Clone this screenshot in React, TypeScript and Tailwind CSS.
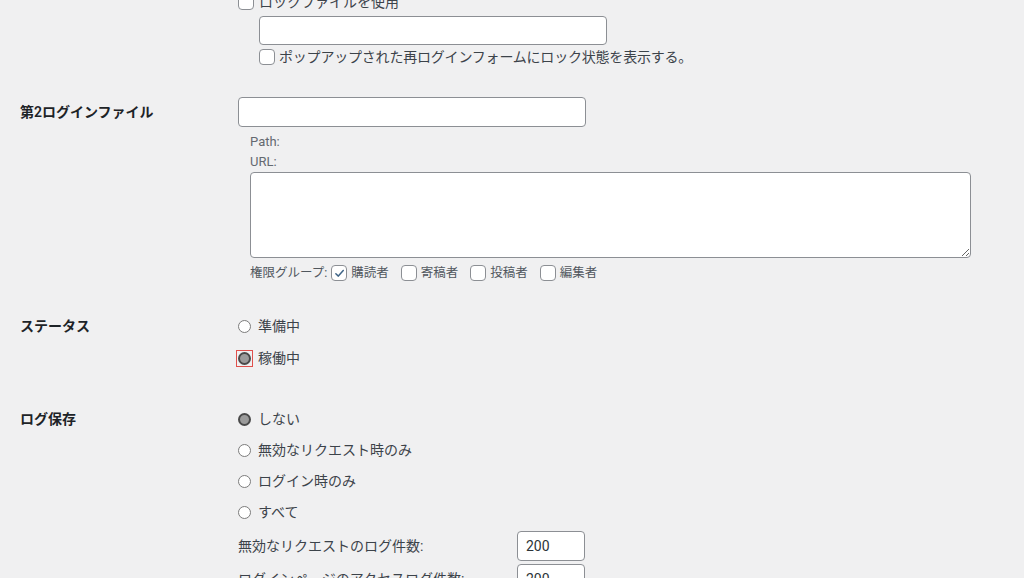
import React from "react";

function Checkbox({ checked = false }: { checked?: boolean }) {
  return (
    <span className="flex h-4 w-4 shrink-0 items-center justify-center rounded-[4px] border border-[#8c8f94] bg-white">
      {checked && (
        <svg viewBox="0 0 16 16" className="h-[13px] w-[13px]">
          <path
            d="M3.5 8.2 L6.6 11.2 L12.6 4.2"
            fill="none"
            stroke="#3f6486"
            strokeWidth="1.8"
            strokeLinecap="round"
            strokeLinejoin="round"
          />
        </svg>
      )}
    </span>
  );
}

function Radio({ checked = false, focused = false }: { checked?: boolean; focused?: boolean }) {
  const dot = checked ? (
    <span className="block h-[13px] w-[13px] shrink-0 rounded-full border-2 border-[#4a4a4a] bg-[#9b9b9b]" />
  ) : (
    <span className="block h-[13px] w-[13px] shrink-0 rounded-full border border-[#7c7c7c] bg-white" />
  );

  if (focused) {
    return (
      <span className="-m-[2px] flex h-[17px] w-[17px] shrink-0 items-center justify-center border border-[#e0504c]">
        {dot}
      </span>
    );
  }

  return dot;
}

function RadioLine({
  label,
  checked,
  focused,
}: {
  label: string;
  checked?: boolean;
  focused?: boolean;
}) {
  return (
    <div className="flex h-6 items-center gap-[7px]">
      <Radio checked={checked} focused={focused} />
      <span>{label}</span>
    </div>
  );
}

function CountRow({ label, value, className }: { label: string; value: string; className?: string }) {
  return (
    <div className={"flex h-[30px] items-center " + (className ?? "")}>
      <span className="w-[279px]">{label}</span>
      <div className="flex h-[30px] w-[68px] items-center rounded-[4px] border border-[#8c8f94] bg-white px-2 text-[#2c3338]">
        {value}
      </div>
    </div>
  );
}

export default function App() {
  const groups = [
    { name: "購読者", checked: true },
    { name: "寄稿者", checked: false },
    { name: "投稿者", checked: false },
    { name: "編集者", checked: false },
  ];

  return (
    <main
      className="h-[578px] overflow-hidden bg-[#f0f0f1] text-[14px] text-[#3c434a]"
      style={{ fontFamily: 'Roboto, "Noto Sans CJK JP", sans-serif' }}
    >
      <section className="-mt-[13px] pl-5">
        {/* lock file */}
        <div className="flex">
          <div className="w-[218px]" />
          <div>
            <div className="mt-[3px] flex h-6 items-center gap-[5px]">
              <Checkbox />
              <span>ロックファイルを使用</span>
            </div>
            <div className="pl-[21px] pt-[2px]">
              <div className="h-[29px] w-[348px] rounded-[4px] border border-[#8c8f94] bg-white" />
              <div className="mt-[4px] flex h-4 items-center gap-[4px]">
                <Checkbox />
                <span className="tracking-[-0.2px]">
                  ポップアップされた再ログインフォームにロック状態を表示する。
                </span>
              </div>
            </div>
          </div>
        </div>

        {/* second login file */}
        <div className="mt-[32px] flex">
          <div className="flex h-[30px] w-[218px] items-center font-semibold text-[#1d2327]">
            第2ログインファイル
          </div>
          <div>
            <div className="h-[30px] w-[348px] rounded-[4px] border border-[#8c8f94] bg-white" />
            <div className="pl-3">
              <p className="mt-[5px] flex h-5 items-center text-[13px] text-[#646970]">Path:</p>
              <p className="flex h-5 items-center text-[13px] text-[#646970]">URL:</p>
              <textarea
                readOnly
                className="block h-[86px] w-[721px] rounded-[4px] border border-[#8c8f94] bg-white"
              />
              <div className="mt-[5px] flex h-5 items-center text-[12.5px] text-[#50575e]">
                <span className="mr-[4px]">権限グループ:</span>
                {groups.map((g) => (
                  <label key={g.name} className="mr-3 flex items-center gap-[4px]">
                    <Checkbox checked={g.checked} />
                    <span>{g.name}</span>
                  </label>
                ))}
              </div>
            </div>
          </div>
        </div>

        {/* status */}
        <div className="mt-[31px] flex">
          <div className="flex h-6 w-[218px] items-center pt-px font-semibold text-[#1d2327]">
            ステータス
          </div>
          <div className="flex flex-col gap-2">
            <RadioLine label="準備中" />
            <RadioLine label="稼働中" checked focused />
          </div>
        </div>

        {/* log */}
        <div className="mt-[37px] flex">
          <div className="flex h-6 w-[218px] items-center font-semibold text-[#1d2327]">
            ログ保存
          </div>
          <div>
            <div className="flex flex-col gap-[7px]">
              <RadioLine label="しない" checked />
              <RadioLine label="無効なリクエスト時のみ" />
              <RadioLine label="ログイン時のみ" />
              <RadioLine label="すべて" />
            </div>
            <CountRow className="mt-[7px]" label="無効なリクエストのログ件数:" value="200" />
            <CountRow className="mt-[3px]" label="ログインページのアクセスログ件数:" value="200" />
          </div>
        </div>
      </section>
    </main>
  );
}
